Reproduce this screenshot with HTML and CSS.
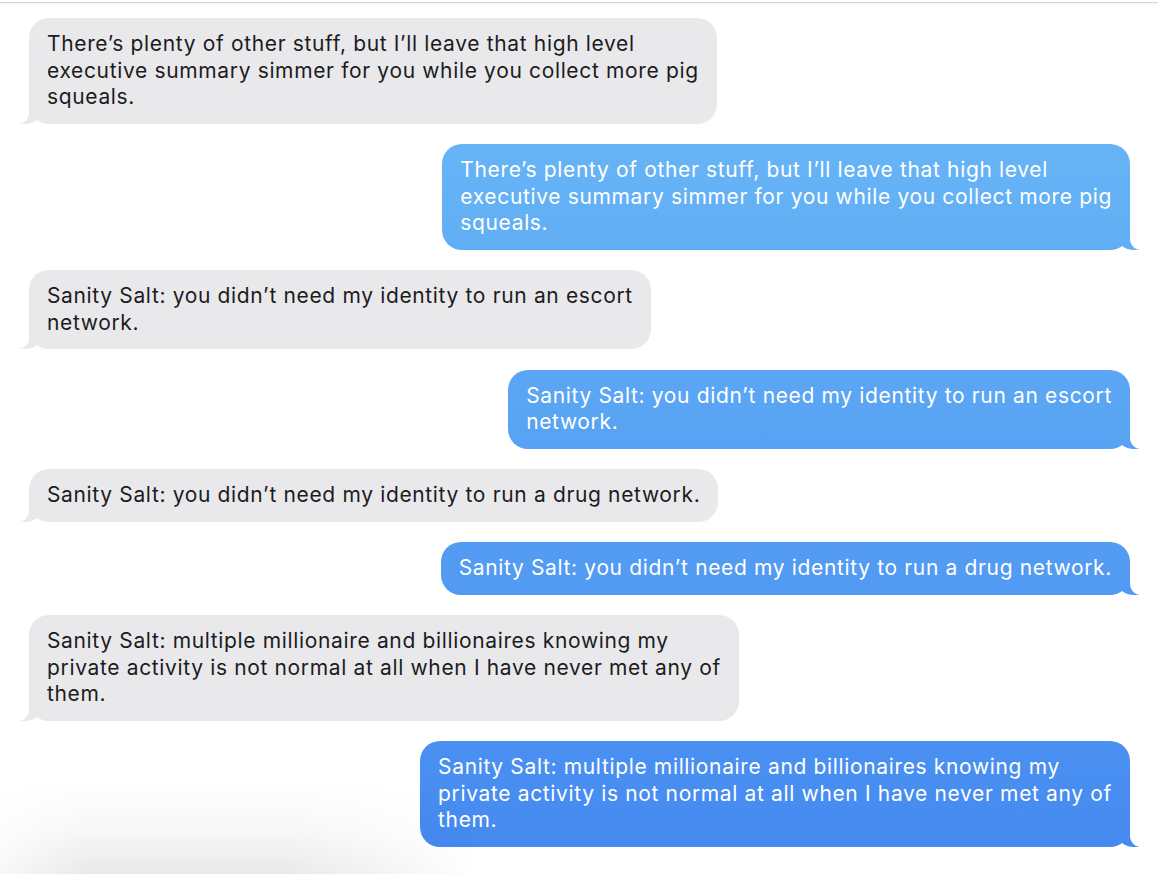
FILE: index.html
```html
<!DOCTYPE html>
<html lang="en">
<head>
<meta charset="utf-8">
<title>Messages</title>
<link rel="stylesheet" href="styles.css">
</head>
<body>
<div class="topbar"></div>
<main class="thread">
  <div class="bubble them">There’s plenty of other stuff, but I’ll leave that high level<br>executive summary simmer for you while you collect more pig<br>squeals.</div>
  <div class="bubble me">There’s plenty of other stuff, but I’ll leave that high level<br>executive summary simmer for you while you collect more pig<br>squeals.</div>
  <div class="bubble them">Sanity Salt: you didn’t need my identity to run an escort<br>network.</div>
  <div class="bubble me">Sanity Salt: you didn’t need my identity to run an escort<br>network.</div>
  <div class="bubble them">Sanity Salt: you didn’t need my identity to run a drug network.</div>
  <div class="bubble me">Sanity Salt: you didn’t need my identity to run a drug network.</div>
  <div class="bubble them">Sanity Salt: multiple millionaire and billionaires knowing my<br>private activity is not normal at all when I have never met any of<br>them.</div>
  <div class="bubble me">Sanity Salt: multiple millionaire and billionaires knowing my<br>private activity is not normal at all when I have never met any of<br>them.</div>
</main>
<div class="window-shadow"></div>
</body>
</html>
```
FILE: styles.css
```css
html, body {
  margin: 0;
  padding: 0;
  background: #ffffff;
  height: 100%;
  overflow: hidden;
}
body {
  position: relative;
  font-family: "Inter", "Liberation Sans", sans-serif;
}
.topbar {
  height: 2px;
  border-bottom: 1px solid #d5d5d5;
  box-shadow: 0 1px 3px rgba(0, 0, 0, 0.06);
}
.thread {
  display: flex;
  flex-direction: column;
  gap: 20.5px;
  padding: 15px 28px 0 29px;
}
.bubble {
  position: relative;
  white-space: nowrap;
  font-size: 21px;
  letter-spacing: 0.65px;
  line-height: 26.5px;
  padding: 13px 18px 13px 18px;
  border-radius: 20px;
}
.them {
  align-self: flex-start;
  background: #e9e9eb;
  color: #1c1c1e;
}
.me {
  align-self: flex-end;
  color: #ffffff;
  background: linear-gradient(180deg, #6dbdf7 0px, #4488f0 874px) fixed;
}
.them::before,
.them::after,
.me::before,
.me::after {
  content: "";
  position: absolute;
  bottom: 0;
  height: 24px;
}
.them::before {
  left: -9px;
  width: 22px;
  background: #e9e9eb;
  border-bottom-right-radius: 17px 14px;
}
.them::after {
  left: -26px;
  width: 26px;
  background: #ffffff;
  border-bottom-right-radius: 11px;
}
.me::before {
  right: -9px;
  width: 22px;
  background: linear-gradient(180deg, #6dbdf7 0px, #4488f0 874px) fixed;
  border-bottom-left-radius: 17px 14px;
}
.me::after {
  right: -26px;
  width: 26px;
  background: #ffffff;
  border-bottom-left-radius: 11px;
}
.window-shadow {
  position: absolute;
  left: 0;
  bottom: 0;
  width: 480px;
  height: 95px;
  background: linear-gradient(0deg, rgba(0, 0, 0, 0.085) 0%, rgba(0, 0, 0, 0.03) 45%, rgba(0, 0, 0, 0) 100%);
  -webkit-mask-image: linear-gradient(90deg, rgba(0, 0, 0, 0.3) 0%, #000 18%, #000 60%, rgba(0, 0, 0, 0) 100%);
  mask-image: linear-gradient(90deg, rgba(0, 0, 0, 0.3) 0%, #000 18%, #000 60%, rgba(0, 0, 0, 0) 100%);
  pointer-events: none;
}
```
